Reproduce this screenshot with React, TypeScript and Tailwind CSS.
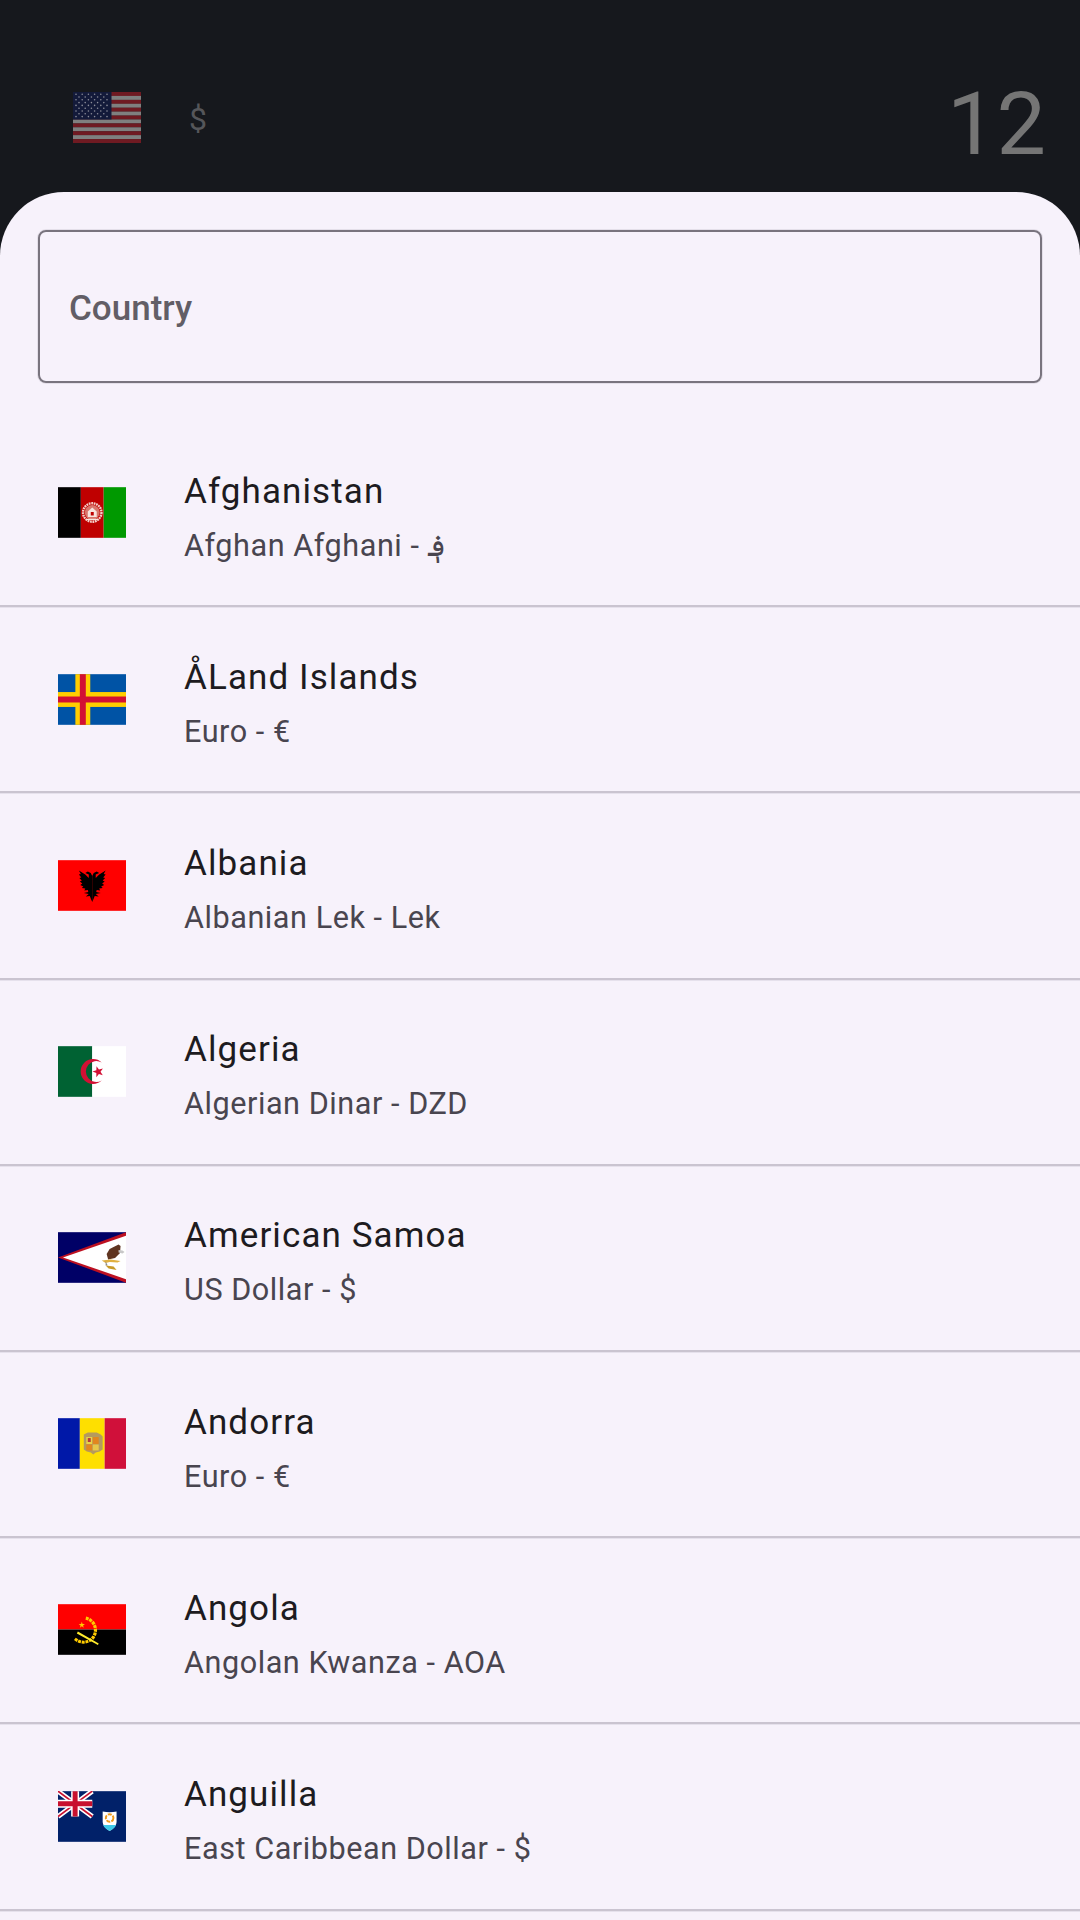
const roboto = "font-['Roboto',sans-serif]";

const star = (cx: number, cy: number, outer: number, inner: number, turn = 0) =>
  Array.from({ length: 10 }, (_, i) => {
    const radius = i % 2 === 0 ? outer : inner;
    const angle = -Math.PI / 2 + turn + (i * Math.PI) / 5;
    return `${cx + radius * Math.cos(angle)},${cy + radius * Math.sin(angle)}`;
  }).join(" ");

// Country flags are all drawn on the same 69x51 grid
const Afghanistan = () => (
  <>
    <rect width="23" height="51" fill="#000" />
    <rect x="23" width="23" height="51" fill="#bf0000" />
    <rect x="46" width="23" height="51" fill="#009900" />
    <circle cx="34.500" cy="25.500" r="7.500" fill="#d9766c" />
    <circle cx="34.500" cy="25.500" r="9.300" fill="none" stroke="#f3cfc8" strokeWidth="2.400" strokeDasharray="1.800 0.700" />
    <path d="M30 30v-5.500l4.500-4 4.500 4V30z" fill="#f8e4df" />
    <rect x="33" y="25" width="3" height="3.500" fill="#bf0000" />
    <path d="M28.500 32.500h12" stroke="#f8e4df" strokeWidth="1.300" />
  </>
);

const Aland = () => (
  <>
    <rect width="69" height="51" fill="#0053a5" />
    <rect x="17.500" width="15" height="51" fill="#ffce00" />
    <rect y="18" width="69" height="15" fill="#ffce00" />
    <rect x="22" width="6" height="51" fill="#d21034" />
    <rect y="22.500" width="69" height="6" fill="#d21034" />
  </>
);

const eagleHalf =
  "M34.500 16L33 13L30 11.500L27.500 13L31 14.500L31 18L27.500 14.500L21 10.500L23 14L21 14.500L23.500 17.500L21.500 18L24 20.500L22 21.500L24.500 23.500L22.500 25L25.500 26.500L24 28L27.500 28.500L26.500 30.500L30 30L30.500 32L26 33L31 34L28 36.500L32 36L33 38.500L34.500 42Z";

const Albania = () => (
  <>
    <rect width="69" height="51" fill="#ff0000" />
    <path d={eagleHalf} fill="#000" />
    <path d={eagleHalf} fill="#000" transform="matrix(-1 0 0 1 69 0)" />
  </>
);

const Algeria = () => (
  <>
    <rect width="34.500" height="51" fill="#006233" />
    <rect x="34.500" width="34.500" height="51" fill="#fff" />
    <path d="M44 16.500A12.500 12.500 0 1 0 44 34.500A10.500 10.500 0 1 1 44 16.500Z" fill="#d21034" />
    <polygon points={star(40.500, 25.700, 5.800, 2.300, -0.300)} fill="#d21034" />
  </>
);

const AmericanSamoa = () => (
  <>
    <rect width="69" height="51" fill="#000066" />
    <path d="M69 0v51L0 25.500z" fill="#bd1021" />
    <path d="M69 3.500v44L5 25.500z" fill="#fff" />
    <path d="M49 22l3-5 9-4.500 2 1.500-.5 7-5 5-7 1.500z" fill="#5f3420" />
    <path d="M61 18l4 .5 2 1.500-2 1.500-4-1z" fill="#c8c8c8" />
    <path d="M44 28.500l9-1 10 1.500-3 1.500-8-.5-4 1z" fill="#e0b040" />
    <path d="M48 29l2 4.500h-2z" fill="#8a8a8a" />
    <path d="M48 33.500l8 1 3 3.500-8-1.500z" fill="#c89a28" />
  </>
);

const Andorra = () => (
  <>
    <rect width="22" height="51" fill="#0018a8" />
    <rect x="22" width="25" height="51" fill="#fedf00" />
    <rect x="47" width="22" height="51" fill="#d0103a" />
    <path d="M26 16.500l4-2h9l4 2 2 2v13l-3 2-4 1-2.500 2-2.500-2-4-1-3-2v-13z" fill="#b49a5e" />
    <rect x="28.500" y="19" width="6" height="7" fill="#e8d44a" />
    <rect x="30" y="20" width="3" height="4" fill="#b83a3a" />
    <rect x="35" y="19" width="6" height="7" fill="#e2861e" />
    <rect x="28.500" y="26.500" width="6" height="6" fill="#e2861e" />
    <rect x="35" y="26.500" width="6" height="6" fill="#e8c84a" />
  </>
);

const Angola = () => (
  <>
    <rect width="69" height="25.500" fill="#ff0000" />
    <rect y="25.500" width="69" height="25.500" fill="#000" />
    <path d="M28 14A12.500 12.500 0 0 1 33 36" fill="none" stroke="#ffcb00" strokeWidth="3.200" strokeDasharray="3 .8" />
    <path d="M17 35Q25 41 33 36" fill="none" stroke="#ffcb00" strokeWidth="3" strokeDasharray="3 .8" />
    <path d="M20 27.500l21 12-.8 1.500-21.200-11.500z" fill="#ffec2d" />
    <polygon points={star(24, 21, 3.300, 1.300)} fill="#ffcb00" />
  </>
);

const Anguilla = () => (
  <>
    <rect width="69" height="51" fill="#012169" />
    <path d="M0 0l34.500 25.500M34.500 0L0 25.500" stroke="#fff" strokeWidth="5" />
    <path d="M0 0l34.500 25.500M34.500 0L0 25.500" stroke="#c8102e" strokeWidth="1.700" />
    <path d="M17.250 0v25.500M0 12.750h34.500" stroke="#fff" strokeWidth="8" />
    <path d="M17.250 0v25.500M0 12.750h34.500" stroke="#c8102e" strokeWidth="5" />
    <path d="M45 20.500q7 1.500 14 0v10.500q0 5-7 9-7-4-7-9z" fill="#fff" />
    <path d="M45.500 34h13q-1.500 3.500-6.500 6-5-2.500-6.500-6z" fill="#3cc8e8" />
    <circle cx="52" cy="27" r="3.800" fill="none" stroke="#f09a1a" strokeWidth="2" strokeDasharray="4 1.200" />
  </>
);

const UnitedStates = () => {
  const stripes = Array.from({ length: 13 }, (_, i) => i);
  const stars: [number, number][] = [];
  for (let row = 0; row < 9; row++) {
    const count = row % 2 === 0 ? 6 : 5;
    for (let col = 0; col < count; col++) {
      stars.push([(row % 2 === 0 ? 3 : 6) + col * 6.2, 2.200 + row * 2.800]);
    }
  }
  return (
    <svg viewBox="0 0 68 51" className="h-[51px] w-[68px] shrink-0" aria-hidden="true">
      {stripes.map((i) => (
        <rect key={i} y={(i * 51) / 13} width="68" height={51 / 13 + 0.1} fill={i % 2 === 0 ? "#6f1a22" : "#7f7f7f"} />
      ))}
      <rect width="38.500" height="27.500" fill="#131a3a" />
      {stars.map(([x, y]) => (
        <circle key={`${x}-${y}`} cx={x} cy={y} r="0.800" fill="#8a8c98" />
      ))}
    </svg>
  );
};

const countries = [
  { name: "Afghanistan", currency: "Afghan Afghani - ؋", Flag: Afghanistan },
  { name: "ÅLand Islands", currency: "Euro - €", Flag: Aland },
  { name: "Albania", currency: "Albanian Lek - Lek", Flag: Albania },
  { name: "Algeria", currency: "Algerian Dinar - DZD", Flag: Algeria },
  { name: "American Samoa", currency: "US Dollar - $", Flag: AmericanSamoa },
  { name: "Andorra", currency: "Euro - €", Flag: Andorra },
  { name: "Angola", currency: "Angolan Kwanza - AOA", Flag: Angola },
  { name: "Anguilla", currency: "East Caribbean Dollar - $", Flag: Anguilla },
];

export default function App() {
  return (
    <div className={`flex h-[1920px] w-[1080px] flex-col overflow-hidden bg-[#16181d] ${roboto}`}>
      <header className="flex h-[192px] shrink-0 items-start pl-[73px] pr-[34px] pt-[92px]">
        <UnitedStates />
        <span className="ml-[48px] mt-[7px] text-[32px] leading-[40px] text-[#55565a]">$</span>
        <span className="ml-auto -mt-[20px] text-[88px] font-normal leading-[104px] text-[#757575]">12</span>
      </header>

      <main className="flex flex-1 flex-col rounded-t-[64px] bg-[#f7f2fb]">
        <div className="px-[38px] pt-[38px]">
          <div className="flex h-[153px] items-center rounded-[8px] border-2 border-[#79747e] pl-[29px] pt-[5px] shadow-[0_0_0_1px_#e4dfe9]">
            <span className="text-[35px] font-medium text-[#625e66]">Country</span>
          </div>
        </div>

        <ul className="mt-[38px]">
          {countries.map(({ name, currency, Flag }) => (
            <li
              key={name}
              className="flex h-[186.2px] items-center border-b-2 border-[#cac4d0] pl-[57.5px] shadow-[0_1px_0_#e6e1ec]"
            >
              <svg viewBox="0 0 69 51" className="-mt-[0.5px] h-[51px] w-[68.5px] shrink-0" aria-hidden="true">
                <Flag />
              </svg>
              <div className="ml-[58px] flex flex-col pt-[7px]">
                <span className="text-[35px] leading-[52px] tracking-[1.1px] text-[#1d1b20]">{name}</span>
                <span className="mt-[6px] text-[30.6px] leading-[44px] tracking-[0.55px] text-[#49454f]">{currency}</span>
              </div>
            </li>
          ))}
        </ul>
      </main>
    </div>
  );
}
